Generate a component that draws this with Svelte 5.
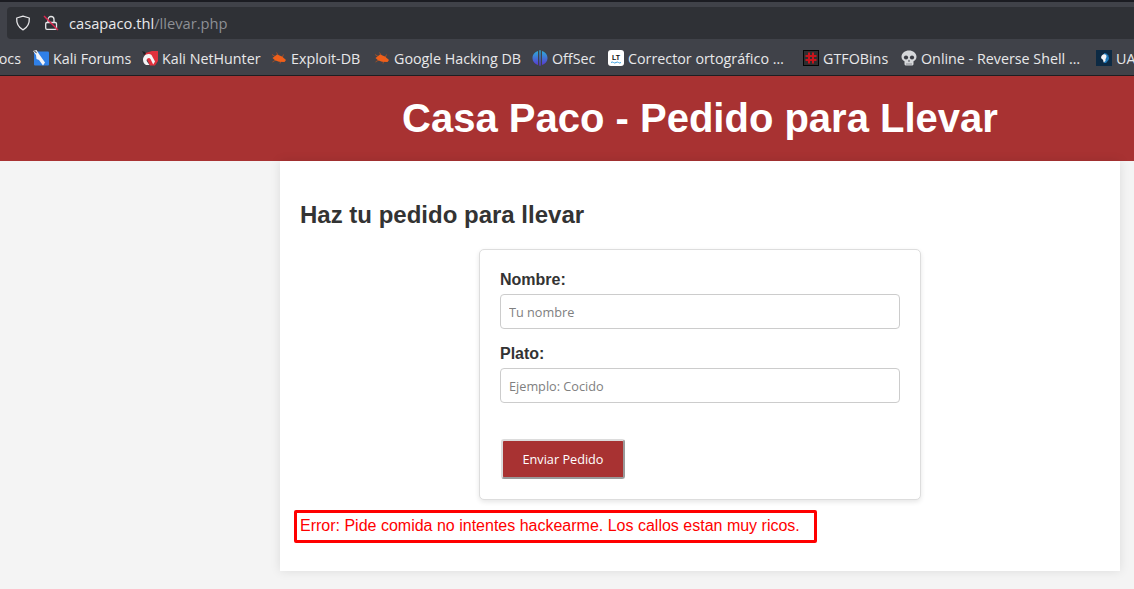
<script>
  const nameHint = 'Tu nombre';
  const dishHint = 'Ejemplo: Cocido';
</script>

<div class="browser">
  <div class="topline"></div>
  <div class="toolbar">
    <div class="urlbar">
      <svg class="shield" viewBox="0 0 16 16" width="16" height="16" fill="none" stroke="#e6e6e8" stroke-width="1.3">
        <path d="M8 1.2 14.3 3c.3 5.200-1.500 9.300-6.300 11.800C3.200 12.300 1.400 8.200 1.700 3Z" stroke-linejoin="round"/>
      </svg>
      <svg class="lock" viewBox="0 0 16 16" width="16" height="16" fill="none">
        <path d="M5 7V4.500a3 3 0 0 1 6 0V7" stroke="#e6e6e8" stroke-width="1.300"/>
        <rect x="2.700" y="7.500" width="10.800" height="6.800" rx="1.300" stroke="#e6e6e8" stroke-width="1.300"/>
        <path d="M1 1 15 15" stroke="#e0264f" stroke-width="1.400"/>
      </svg>
      <span class="url">casapaco.thl<span class="path">/llevar.php</span></span>
    </div>
  </div>
  <div class="bookmarks">
    <span class="mark docs">Docs</span>

    <span class="mark forums">
      <svg viewBox="0 0 16 16" width="16" height="16">
        <rect x="1" y="1.500" width="15" height="14" rx="1" fill="#2f80e8"/>
        <path d="M0 1 3.500 0 6 4l6 8.500-2 3-4-5.500-2.500-1L3 5z" fill="#f2f4f8"/>
        <path d="M.5 1.200 3 1.500l1 2z" fill="#23242a"/>
      </svg>
      <span>Kali Forums</span>
    </span>

    <span class="mark hunter">
      <svg viewBox="0 0 16 16" width="16" height="16">
        <path d="M2 3.500 10 1h6v10l-3 4.500H8z" fill="#e0303c"/>
        <path d="M1 9a5.500 5.500 0 0 1 8.500-4l3.500 6.500-1.800 3-2.700-5.500a2 2 0 0 0-3.500 2.500l2.500 3.500H5C2.500 15 1 12.500 1 9Z" fill="#f4f4f6"/>
        <path d="M0 1l3 1 1 2-2 1z" fill="#1f1f24"/>
      </svg>
      <span>Kali NetHunter</span>
    </span>

    <span class="mark exploit">
      <svg viewBox="0 0 16 16" width="16" height="16">
        <path d="M1 4.500l4 2.500M5.500 2.500l2.500 4M1.500 12l4-2.500M9 13.500l1-3.500M12.500 4.500l-1.500 3.500" stroke="#b5501f" stroke-width=".8"/>
        <path d="M1.500 8 6 4.500 11 6.500 15 10l-1.500 2-5.500-.3-4-1.500z" fill="#ef5f1a"/>
      </svg>
      <span>Exploit-DB</span>
    </span>

    <span class="mark google">
      <svg viewBox="0 0 16 16" width="16" height="16">
        <path d="M1 4.500l4 2.500M5.500 2.500l2.500 4M1.500 12l4-2.500M9 13.500l1-3.500M12.500 4.500l-1.500 3.500" stroke="#b5501f" stroke-width=".8"/>
        <path d="M1.500 8 6 4.500 11 6.500 15 10l-1.500 2-5.500-.3-4-1.500z" fill="#ef5f1a"/>
      </svg>
      <span>Google Hacking DB</span>
    </span>

    <span class="mark offsec">
      <svg viewBox="0 0 16 16" width="16" height="16">
        <defs>
          <linearGradient id="os" x1="0" y1="0" x2="0" y2="1">
            <stop offset="0" stop-color="#2bb0d8"/>
            <stop offset="1" stop-color="#5a35d0"/>
          </linearGradient>
        </defs>
        <path d="M6 1C3 1.800 .5 4.600 .5 8S3 14.200 6 15zM7.300 .3h1.400V15.700H7.300zM10 1c3 .8 5.500 3.600 5.500 7S13 14.200 10 15z" fill="url(#os)"/>
      </svg>
      <span>OffSec</span>
    </span>

    <span class="mark corrector">
      <svg viewBox="0 0 16 16" width="16" height="16">
        <rect width="16" height="16" rx="3" fill="#fff"/>
        <text x="8" y="9.500" text-anchor="middle" class="lt">LT</text>
        <path d="M3 12.500q1.300-1 2.500 0t2.500 0 2.500 0 2.500 0" fill="none" stroke="#3aa0e0" stroke-width="1"/>
      </svg>
      <span>Corrector ortográfico …</span>
    </span>

    <span class="mark gtfo">
      <svg viewBox="0 0 16 16" width="16" height="16">
        <rect x=".5" y=".5" width="15" height="15" fill="#2e2e30" stroke="#050505"/>
        <path d="M6 2.500v11M10 2.500v11M2.500 6h11M2.500 10h11" stroke="#c8141c" stroke-width="2"/>
      </svg>
      <span>GTFOBins</span>
    </span>

    <span class="mark reverse">
      <svg viewBox="0 0 16 16" width="16" height="16">
        <path d="M8 .5c4 0 7.500 2.600 7.500 6.300 0 2.300-1.200 3.700-3 4.500V14c0 1-1 1.500-2 1.500h-5c-1 0-2-.5-2-1.500v-2.700c-1.800-.8-3-2.200-3-4.500C.5 3.100 4 .5 8 .5Z" fill="#d5d7da"/>
        <circle cx="5" cy="7.500" r="2.100" fill="#3b3d44"/>
        <circle cx="11" cy="7.500" r="2.100" fill="#3b3d44"/>
        <path d="M8 9.500 7 11.500h2z" fill="#3b3d44"/>
        <path d="M6 13v2.500M8 13v2.500M10 13v2.500" stroke="#6a6c72" stroke-width=".7"/>
      </svg>
      <span>Online - Reverse Shell …</span>
    </span>

    <span class="mark ua">
      <svg viewBox="0 0 16 16" width="16" height="16">
        <rect width="16" height="16" fill="#0c2a44"/>
        <path d="M8 3a5 5 0 0 1 4.500 7L10 13H8z" fill="#1f78b8"/>
        <path d="M5.500 6c1.500-2.500 5-2 5 .5 0 1.500-1.500 2-1 4.500l-2 1.500c0-2-.5-3-1.500-3.500S4.800 7.200 5.500 6Z" fill="#f4f6f8"/>
      </svg>
      <span>UA</span>
    </span>
  </div>
</div>

<header class="banner">
  <h1>Casa Paco - Pedido para Llevar</h1>
</header>

<main class="sheet">
  <h2>Haz tu pedido para llevar</h2>
  <form class="order" onsubmit={(e) => e.preventDefault()}>
    <label for="nombre">Nombre:</label>
    <input id="nombre" type="text" placeholder={nameHint} />
    <label for="plato">Plato:</label>
    <input id="plato" type="text" placeholder={dishHint} />
    <button type="submit">Enviar Pedido</button>
  </form>
  <p class="error"><span class="msg">Error: Pide comida no intentes hackearme. Los callos estan muy ricos.</span></p>
</main>

<style>
  :global(html), :global(body) {
    margin: 0;
    background: #f4f4f4;
    overflow: hidden;
  }
  :global(body) {
    font-family: "Liberation Sans", Arial, sans-serif;
    color: #333;
    width: 1134px;
    height: 589px;
  }
  :global(#app) {
    width: 1400px;
  }

  .browser {
    background: #404249;
    border-bottom: 1px solid #1d1e22;
    height: 75px;
    font-family: "Open Sans", sans-serif;
    overflow: hidden;
  }
  .topline {
    height: 2px;
    background: #1b1c22;
  }
  .toolbar {
    padding: 5px 0 0 7px;
  }
  .urlbar {
    height: 32px;
    background: #2f3136;
    border-radius: 4px 0 0 4px;
    display: flex;
    align-items: center;
    padding-left: 8px;
  }
  .shield { flex: none; }
  .lock { flex: none; margin-left: 12px; }
  .url {
    margin-left: 10px;
    font-size: 14.7px;
    color: #e9e9eb;
  }
  .path { color: #8d8f94; }

  .bookmarks {
    display: flex;
    align-items: center;
    gap: 12px;
    height: 36px;
    padding-top: 2px;
    box-sizing: border-box;
    margin-left: -16px;
    font-size: 14.3px;
    color: #e8e8ea;
    white-space: nowrap;
  }
  .mark {
    display: flex;
    align-items: center;
    gap: 4px;
    flex: none;
  }
  .mark svg { flex: none; }
  .docs { width: 37px; justify-content: flex-end; }
  .forums span { width: 77px; }
  .hunter span { width: 97px; }
  .exploit span { width: 71px; }
  .google span { width: 126px; }
  .offsec span { width: 44px; }
  .corrector span { width: 156px; }
  .corrector { margin-right: 7px; }
  .gtfo span { width: 66px; }
  .reverse span { width: 161px; }
  .reverse { margin-right: 2px; }
  .lt {
    font: 700 7px "Liberation Sans", sans-serif;
    fill: #111;
  }

  .banner {
    background: #a83232;
    color: #fff;
    text-align: center;
    padding: 20px 0;
  }
  h1 {
    margin: 0;
    font-size: 40px;
  }

  .sheet {
    width: 800px;
    margin: 0 auto;
    padding: 20px;
    background: #fff;
    box-shadow: 0 0 10px rgba(0, 0, 0, 0.1);
    position: relative;
  }
  h2 {
    font-size: 24px;
    margin: 19.92px 0;
  }
  .order {
    width: 400px;
    margin: 0 auto;
    padding: 20px;
    border: 1px solid #ddd;
    border-radius: 5px;
    background: #fff;
    box-shadow: 0 2px 5px rgba(0, 0, 0, 0.1);
  }
  label {
    display: block;
    font-weight: 700;
    font-size: 16px;
    padding-top: 1px;
    margin-bottom: 5px;
  }
  input {
    display: block;
    box-sizing: border-box;
    width: 400px;
    height: 35px;
    margin: 0 0 15px;
    padding: 9px 8px 7px;
    border: 1px solid #ccc;
    border-radius: 4px;
    background: #fff;
    font: 12.7px "Open Sans", sans-serif;
    outline: none;
  }
  input::placeholder {
    color: #808080;
    opacity: 1;
  }
  button {
    display: block;
    box-sizing: border-box;
    width: 124px;
    height: 40px;
    margin: 36px 0 0 1px;
    background: #a83232;
    color: #fff;
    border: 2px solid;
    border-color: #dcdcdc #9a9a9a #9a9a9a #dcdcdc;
    border-radius: 3px;
    font: 12.7px "Open Sans", sans-serif;
  }
  #plato { margin-bottom: 0; }

  .error {
    margin: 17px 0 16px;
    color: #f00;
    font-size: 16px;
  }
  .msg {
    display: inline-block;
    position: relative;
  }
  .msg::after {
    content: "";
    position: absolute;
    top: -7px;
    bottom: -8px;
    left: -6px;
    right: -17px;
    border: 3px solid #f00;
    border-radius: 2px;
  }
</style>
